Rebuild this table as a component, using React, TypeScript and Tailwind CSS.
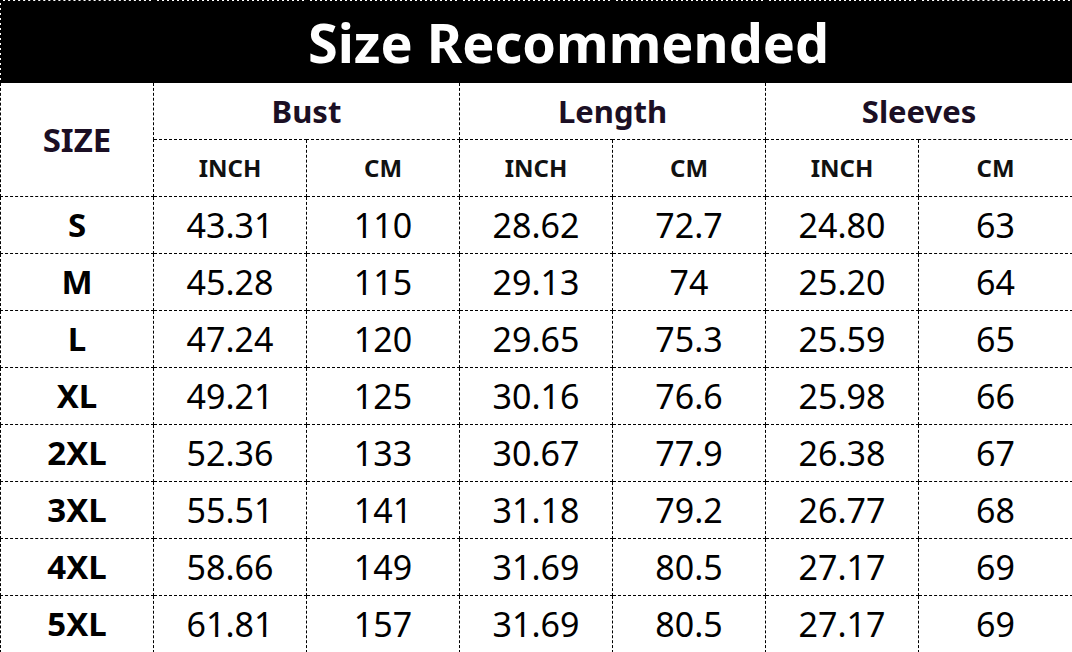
const rows = [
  ["S", "43.31", "110", "28.62", "72.7", "24.80", "63"],
  ["M", "45.28", "115", "29.13", "74", "25.20", "64"],
  ["L", "47.24", "120", "29.65", "75.3", "25.59", "65"],
  ["XL", "49.21", "125", "30.16", "76.6", "25.98", "66"],
  ["2XL", "52.36", "133", "30.67", "77.9", "26.38", "67"],
  ["3XL", "55.51", "141", "31.18", "79.2", "26.77", "68"],
  ["4XL", "58.66", "149", "31.69", "80.5", "27.17", "69"],
  ["5XL", "61.81", "157", "31.69", "80.5", "27.17", "69"],
];

const cell = "border border-dashed border-black p-0 text-center align-middle";

function App() {
  return (
    <main
      className="w-[1072px] h-[652px] bg-white overflow-hidden"
      style={{ fontFamily: '"Noto Sans", "Open Sans", sans-serif' }}
    >
      <table className="w-[1072px] table-fixed border-collapse">
        <colgroup>
          <col className="w-[153px]" />
          <col className="w-[153px]" />
          <col className="w-[153px]" />
          <col className="w-[153px]" />
          <col className="w-[153px]" />
          <col className="w-[153px]" />
          <col className="w-[154px]" />
        </colgroup>
        <thead>
          <tr className="h-[82px]">
            <th
              colSpan={7}
              className={`${cell} bg-black pl-[64px] text-[54px] font-bold leading-none text-white`}
            >
              Size Recommended
            </th>
          </tr>
          <tr className="h-[57px] text-[#1b0f24]">
            <th rowSpan={2} className={`${cell} text-[33px] font-bold`}>
              SIZE
            </th>
            <th colSpan={2} className={`${cell} text-[31px] font-bold`}>
              Bust
            </th>
            <th colSpan={2} className={`${cell} text-[31px] font-bold`}>
              Length
            </th>
            <th colSpan={2} className={`${cell} text-[31px] font-bold`}>
              Sleeves
            </th>
          </tr>
          <tr className="h-[57px] text-[#111]">
            {["INCH", "CM", "INCH", "CM", "INCH", "CM"].map((h, i) => (
              <th key={i} className={`${cell} text-[24px] font-bold`}>
                {h}
              </th>
            ))}
          </tr>
        </thead>
        <tbody>
          {rows.map((r) => (
            <tr key={r[0]} className="h-[57px] text-black">
              {r.map((v, i) => (
                <td
                  key={i}
                  className={`${cell} ${i === 0 ? "text-[33px] font-bold" : "text-[34px]"}`}
                >
                  {v}
                </td>
              ))}
            </tr>
          ))}
        </tbody>
      </table>
    </main>
  );
}

export default App;
